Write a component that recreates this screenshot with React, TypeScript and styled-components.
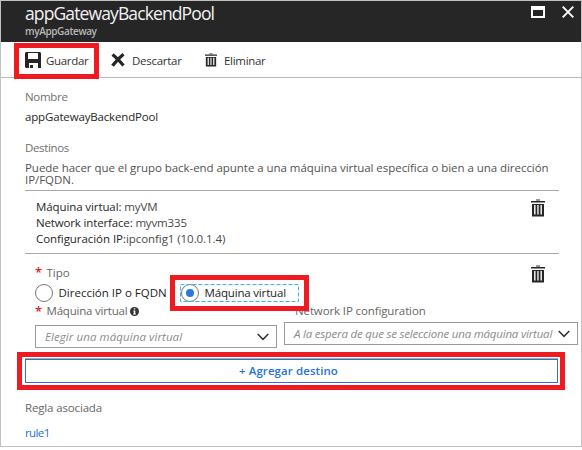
import React from 'react';
import styled, { createGlobalStyle } from 'styled-components';

const Global = createGlobalStyle`
  * { box-sizing: border-box; }
  body { margin: 0; background: #fff; }
  button { font: inherit; border: 0; padding: 0; background: none; }
`;

const Blade = styled.main`
  position: relative;
  width: 582px;
  height: 447px;
  border: 1px solid #c1c1c1;
  font: 11.5px/16px 'Open Sans', 'Noto Sans', sans-serif;
  color: #262626;
  background: #fff;
  white-space: nowrap;
`;

const Header = styled.header`
  display: flex;
  justify-content: space-between;
  height: 41px;
  padding: 0 7px 0 24px;
  background: #262626;
`;

const Title = styled.h1`
  margin: 0;
  font-size: 17.5px;
  line-height: 24px;
  font-weight: 400;
  letter-spacing: -0.88px;
  color: #f2f2f2;
`;

const Subtitle = styled.div`
  font-size: 10px;
  line-height: 12px;
  font-weight: 600;
  letter-spacing: -0.37px;
  color: #b8b8b8;
`;

const WindowControls = styled.div`
  display: flex;
  gap: 17px;
  padding-top: 5px;
`;

const Toolbar = styled.nav`
  display: flex;
  align-items: center;
  height: 36px;
  padding: 1px 0 0 24px;
  border-bottom: 1px solid #b9b9b9;
`;

const Command = styled.button<{ $width: number; $gap: number }>`
  display: flex;
  align-items: center;
  gap: ${p => p.$gap}px;
  width: ${p => p.$width}px;
  color: #333;

  span { padding-top: 2px; }
`;

const Text = styled.span<{ $track?: number; $tone?: string }>`
  letter-spacing: ${p => p.$track ?? 0}px;
  color: ${p => p.$tone ?? 'inherit'};
`;

const Body = styled.section`
  padding: 11px 22px 0 24px;
`;

const Field = styled.div<{ $gap: number; $before?: number; $after?: number }>`
  display: flex;
  flex-direction: column;
  gap: ${p => p.$gap}px;
  margin-top: ${p => p.$before ?? 0}px;
  margin-bottom: ${p => p.$after ?? 0}px;
`;

const Hint = styled.p`
  margin: 0;
  line-height: 12px;
  letter-spacing: -0.045px;
  color: #525252;
  width: 530px;
  white-space: normal;
`;

const Target = styled.div`
  display: flex;
  justify-content: space-between;
  height: 64px;
  margin-top: 4px;
  padding: 8px 14px 0 11px;
  border: solid #a8a8a8;
  border-width: 1px 0;
`;

const TargetForm = styled.div`
  height: 105px;
`;

const TypeRow = styled.div`
  display: flex;
  justify-content: space-between;
  height: 30px;
  padding: 11px 14px 0 10px;
`;

const Required = styled.span`
  display: inline-block;
  width: 11.5px;
  font-size: 13px;
  font-weight: 600;
  line-height: 12px;
  color: #e02030;
`;

const Radios = styled.div`
  display: flex;
  height: 19px;
  padding-left: 10px;
`;

const Radio = styled.label<{ $width: number }>`
  display: flex;
  align-items: center;
  gap: 5.5px;
  width: ${p => p.$width}px;
  height: 18px;
  color: #222;
`;

const Ring = styled.i`
  display: grid;
  place-items: center;
  width: 18px;
  height: 18px;
  border: 1px solid #777;
  border-radius: 50%;
  background: #fff;
`;

const Dot = styled.i`
  width: 8px;
  height: 8px;
  border-radius: 50%;
  background: #2b77de;
`;

const FocusFrame = styled.svg`
  position: absolute;
  left: 179px;
  top: 283px;
`;

const Selectors = styled.div`
  display: flex;
  width: 543px;
  margin-left: 10px;
  justify-content: space-between;
`;

const Selector = styled.div<{ $width: number; $gap: number }>`
  display: flex;
  flex-direction: column;
  gap: ${p => p.$gap}px;
  width: ${p => p.$width}px;
`;

const SelectorLabel = styled.div<{ $indent?: number }>`
  display: flex;
  align-items: center;
  height: 16px;
  padding-left: ${p => p.$indent ?? 0}px;
  color: #666;
`;

const Select = styled.button<{ $end: number }>`
  display: flex;
  align-items: center;
  justify-content: space-between;
  height: 23px;
  padding: 0 ${p => p.$end}px 0 9px;
  border: 1px solid #999;
  color: #8b8b8b;
  font-style: italic;
`;

const AddButton = styled.button`
  display: flex;
  align-items: center;
  justify-content: center;
  width: 533px;
  height: 24px;
  padding-right: 6px;
  border: 1px solid #2873d5;
  box-shadow: 0 -1px #aaa;
  color: #2873d5;
  font-weight: 600;
`;

const Link = styled.a`
  letter-spacing: -0.6px;
  color: #2271d8;
`;

const Highlight = styled.div<{ $x: number; $y: number; $w: number; $h: number }>`
  position: absolute;
  left: ${p => p.$x - 1}px;
  top: ${p => p.$y - 1}px;
  width: ${p => p.$w}px;
  height: ${p => p.$h}px;
  border: 5px solid #ef1b23;
  pointer-events: none;
`;

const SaveIcon = () => (
  <svg width="16" height="16" viewBox="0 0 16 16">
    <path fill="#262626" fillRule="evenodd" d="M1 0H15L16 1V16H13V11H4V16H1L0 15V1ZM3 1V7H13V1Z" />
    <path fill="#262626" d="M5 13h3v3H5z" />
  </svg>
);

const DiscardIcon = () => (
  <svg width="14" height="14" viewBox="0 0 14 14">
    <path d="M1.5 1.5Q6 5 12.5 12.5M12.5 1.2Q7 5.5 1.5 12.8" fill="none" stroke="#262626" strokeWidth="3.2" />
  </svg>
);

const TrashIcon = ({ large = false }: { large?: boolean }) => (
  <svg width={large ? 14 : 12} height={large ? 18 : 14} viewBox="0 0 14 18" preserveAspectRatio="none">
    <path fill="#999" d="M5 0h4v2H5z" />
    <path fill="#262626" d="M0 2h14v1.6H0zM1 5h12v12.5H1z" />
    <path fill="#e4e4e4" d="M3 6h1.6v9.5H3zM6.2 6h1.5v9.5H6.2zM9.4 6H11v9.5H9.4z" />
  </svg>
);

const MaximizeIcon = () => (
  <svg width="14" height="12" viewBox="0 0 14 12">
    <path fill="#fff" fillRule="evenodd" d="M0 0H14V12H0ZM2 4V10H12V4Z" />
  </svg>
);

const CloseIcon = () => (
  <svg width="12" height="12" viewBox="0 0 12 12">
    <path d="M.7.7 11.3 11.3M11.3.7.7 11.3" stroke="#fff" strokeWidth="1.9" />
  </svg>
);

const InfoIcon = () => (
  <svg width="9" height="9" viewBox="0 0 9 9">
    <circle cx="4.5" cy="4.5" r="4.5" fill="#333" />
    <path fill="#fff" d="M3.8 1.3h1.5v1.3H3.8zM3.3 3.5h2v3h.6v.9H3.1v-.9h.7v-2h-.5z" />
  </svg>
);

const Chevron = () => (
  <svg width="12" height="8" viewBox="0 0 12 8">
    <path d="M.7 1 6 6.4 11.3 1" fill="none" stroke="#333" strokeWidth="1.5" />
  </svg>
);

export default function App() {
  return (
    <>
      <Global />
      <Blade>
        <Header>
          <div>
            <Title>appGatewayBackendPool</Title>
            <Subtitle>myAppGateway</Subtitle>
          </div>
          <WindowControls><MaximizeIcon /><CloseIcon /></WindowControls>
        </Header>
        <Toolbar>
          <Command $width={86} $gap={5}><SaveIcon /><Text $track={-0.31}>Guardar</Text></Command>
          <Command $width={94} $gap={7}><DiscardIcon /><Text $track={-0.28}>Descartar</Text></Command>
          <Command $width={62} $gap={7}><TrashIcon /><Text $track={-0.3}>Eliminar</Text></Command>
        </Toolbar>
        <Body>
          <Field $gap={4} $after={15}>
            <Text $track={-0.3} $tone="#707070">Nombre</Text>
            <Text $track={-0.16}>appGatewayBackendPool</Text>
          </Field>
          <Field $gap={6}>
            <Text $track={-0.35} $tone="#707070">Destinos</Text>
            <Hint>
              Puede hacer que el grupo back-end apunte a una máquina virtual específica o bien a una dirección IP/FQDN.
            </Hint>
          </Field>
          <Target>
            <Field $gap={0}>
              <Text $track={-0.1}>Máquina virtual: <Text $track={-0.1} $tone="#484848">myVM</Text></Text>
              <Text $track={-0.15}>Network interface: <Text $track={-0.15} $tone="#484848">myvm335</Text></Text>
              <Text $track={-0.06}>Configuración IP:<Text $track={-0.06} $tone="#484848">ipconfig1 (10.0.1.4)</Text></Text>
            </Field>
            <TrashIcon large />
          </Target>
          <TargetForm>
            <TypeRow>
              <Text $tone="#666"><Required>*</Required>Tipo</Text>
              <TrashIcon large />
            </TypeRow>
            <Radios>
              <Radio $width={146}><Ring /><Text>Dirección IP o FQDN</Text></Radio>
              <Radio $width={118}><Ring><Dot /></Ring><Text $track={-0.17}>Máquina virtual</Text></Radio>
            </Radios>
            <Selectors>
              <Selector $width={242} $gap={6}>
                <SelectorLabel><Required>*</Required><Text $track={-0.2}>Máquina virtual</Text>&nbsp;<InfoIcon /></SelectorLabel>
                <Select $end={7}><Text $track={0.08}>Elegir una máquina virtual</Text><Chevron /></Select>
              </Selector>
              <Selector $width={294} $gap={3}>
                <SelectorLabel $indent={11}><Text $track={-0.12}>Network IP configuration</Text></SelectorLabel>
                <Select $end={7}><Text $track={-0.2}>A la espera de que se seleccione una máquina virtual</Text><Chevron /></Select>
              </Selector>
            </Selectors>
          </TargetForm>
          <AddButton><Text $track={0.08}>+ Agregar destino</Text></AddButton>
          <Field $gap={9} $before={17}>
            <Text $track={-0.15} $tone="#666">Regla asociada</Text>
            <Link>rule1</Link>
          </Field>
        </Body>
        <FocusFrame width="119" height="18">
          <rect x=".5" y=".5" width="118" height="17" fill="none" stroke="#35b5ec" strokeDasharray="4 2" />
        </FocusFrame>
        <Highlight $x={14} $y={43} $w={85} $h={36} />
        <Highlight $x={170} $y={275} $w={139} $h={36} />
        <Highlight $x={17} $y={352} $w={548} $h={38} />
      </Blade>
    </>
  );
}
